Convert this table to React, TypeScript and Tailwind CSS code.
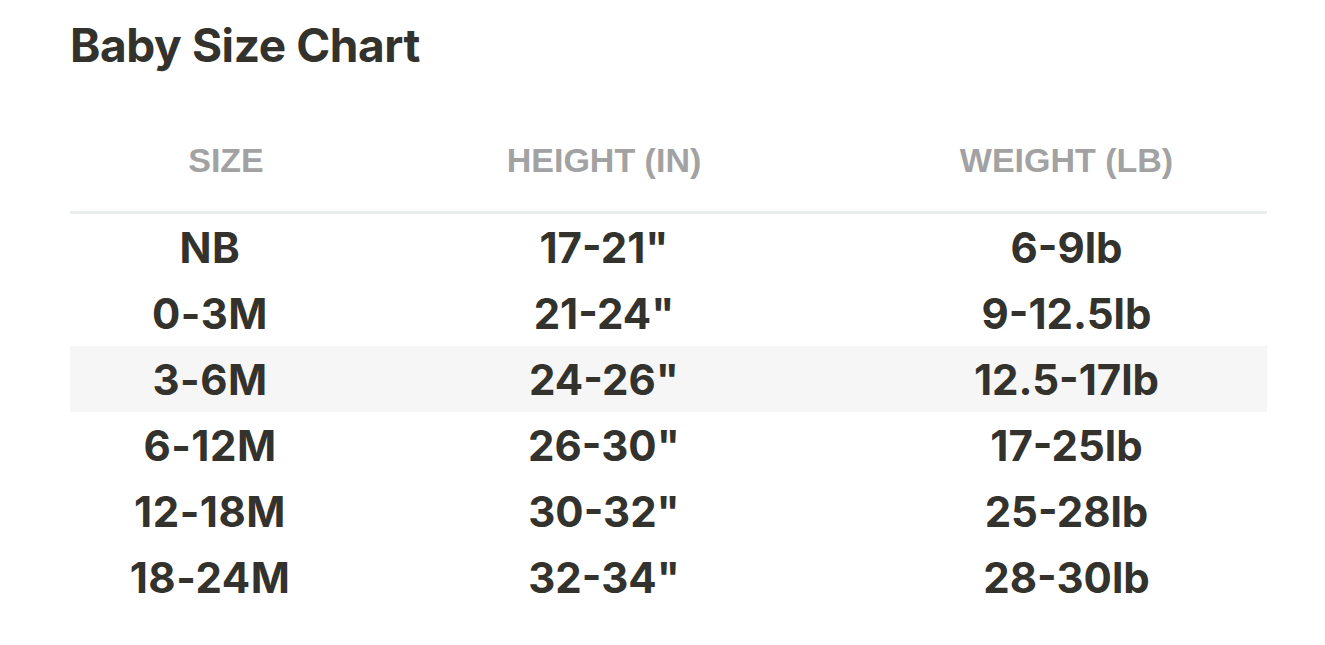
const rows = [
  { size: "NB", height: '17-21"', weight: "6-9lb" },
  { size: "0-3M", height: '21-24"', weight: "9-12.5lb" },
  { size: "3-6M", height: '24-26"', weight: "12.5-17lb" },
  { size: "6-12M", height: '26-30"', weight: "17-25lb" },
  { size: "12-18M", height: '30-32"', weight: "25-28lb" },
  { size: "18-24M", height: '32-34"', weight: "28-30lb" },
];

const cols = "grid grid-cols-[272px_524px_401px]";

export default function App() {
  return (
    <div className="h-[645px] w-[1325px] bg-white px-[70px] pt-[20px] text-[#33322d]" style={{ fontFamily: "Inter, sans-serif" }}>
      <h1 className="text-[46px] font-bold leading-[50px] tracking-[-0.4px]">Baby Size Chart</h1>

      <div className="mt-[70px] w-[1197px]">
        <div
          className={`${cols} h-[74px] items-start border-b-[3px] border-[#e9eded] pt-[3px] text-[34px] font-bold leading-[34px] text-[#a2a2a2]`}
          style={{ fontFamily: "'Liberation Sans', Arial, sans-serif" }}
        >
          <div className="pl-[40px] text-center">SIZE</div>
          <div className="text-center">HEIGHT (IN)</div>
          <div className="text-center">WEIGHT (LB)</div>
        </div>

        {rows.map((r, i) => (
          <div
            key={r.size}
            className={`${cols} h-[66px] items-center text-[42px] font-bold ${i === 2 ? "bg-[#f6f6f6]" : ""}`}
          >
            <div className="pl-[8px] text-center tracking-[0.5px]">{r.size}</div>
            <div className="text-center">{r.height}</div>
            <div className="text-center">{r.weight}</div>
          </div>
        ))}
      </div>
    </div>
  );
}
